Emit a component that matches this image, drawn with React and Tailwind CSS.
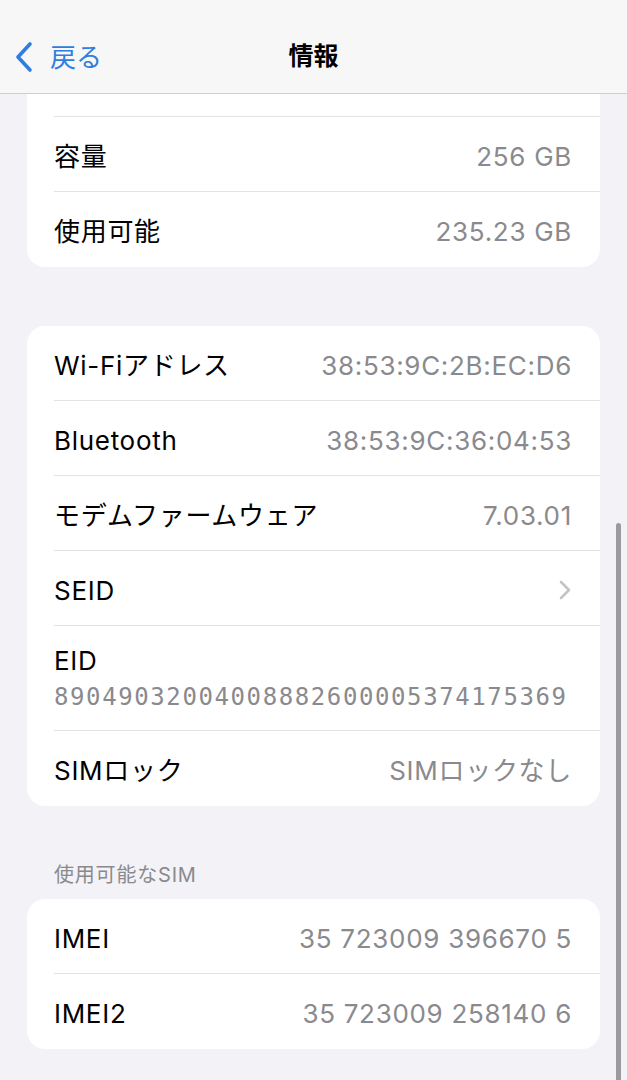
const font = { fontFamily: '"Inter", "Noto Sans CJK JP", sans-serif' };

const Row = ({ label, value, last, chevron }) => (
    <div className="pl-[27px]">
        <div className={`flex items-center justify-between h-[75px] pt-[4px] pr-[28px] tracking-[0.7px] ${last ? '' : 'border-b border-[#e3e3e6]'}`}>
            <span className="text-[26px] text-black">{label}</span>
            {chevron ? (
                <svg width="12" height="20" viewBox="0 0 12 20" className="mr-[1px]">
                    <path d="M2 2 L10 10 L2 18" fill="none" stroke="#c4c4c7" strokeWidth="2.6" strokeLinecap="round" strokeLinejoin="round" />
                </svg>
            ) : (
                <span className="text-[26px] text-[#8a8a8e]">{value}</span>
            )}
        </div>
    </div>
);

const App = () => {
    return (
        <div className="relative min-h-[1080px] bg-[#f2f2f7] overflow-hidden" style={font}>
            <div className="relative h-[94px] bg-[#f7f7f7] border-b border-[#cfcfd2] flex items-center justify-center">
                <div className="absolute left-[14px] top-[41px] flex items-center">
                    <svg width="20" height="32" viewBox="0 0 20 32">
                        <path d="M16 3 L4 16 L16 29" fill="none" stroke="#2f7de1" strokeWidth="3.6" strokeLinecap="round" strokeLinejoin="round" />
                    </svg>
                    <span className="ml-[16px] mt-[2px] text-[26px] text-[#2f7de1] leading-none">戻る</span>
                </div>
                <h1 className="mt-[20px] text-[25px] font-bold text-black">情報</h1>
            </div>

            <div className="px-[27px]">
                <div className="bg-white rounded-b-[18px]">
                    <div className="pl-[27px]">
                        <div className="h-[23px] border-b border-[#e3e3e6]" />
                    </div>
                    <Row label="容量" value="256 GB" />
                    <Row label="使用可能" value="235.23 GB" last />
                </div>

                <div className="bg-white rounded-[18px] mt-[59px]">
                    <Row label="Wi-Fiアドレス" value="38:53:9C:2B:EC:D6" />
                    <Row label="Bluetooth" value="38:53:9C:36:04:53" />
                    <Row label="モデムファームウェア" value="7.03.01" />
                    <Row label="SEID" chevron />
                    <div className="pl-[27px]">
                        <div className="h-[105px] border-b border-[#e3e3e6] flex flex-col justify-center pt-[4px] pr-[28px]">
                            <span className="text-[26px] text-black leading-[34px] tracking-[0.7px]">EID</span>
                            <span
                                className="text-[24px] text-[#8a8a8e] leading-[38px] tracking-[1.6px]"
                                style={{ fontFamily: '"DejaVu Sans Mono", monospace' }}
                            >
                                89049032004008882600005374175369
                            </span>
                        </div>
                    </div>
                    <Row label="SIMロック" value="SIMロックなし" last />
                </div>

                <div className="mt-[57px] pl-[27px] text-[20px] text-[#8a8a8e] leading-[24px] tracking-[0.8px]">使用可能なSIM</div>

                <div className="bg-white rounded-[18px] mt-[12px]">
                    <Row label="IMEI" value="35 723009 396670 5" />
                    <Row label="IMEI2" value="35 723009 258140 6" last />
                </div>
            </div>

            <div className="absolute left-[616px] top-[523px] w-[5px] h-[600px] rounded-full bg-[#9b9b9e]" />
        </div>
    );
};

export default App;
